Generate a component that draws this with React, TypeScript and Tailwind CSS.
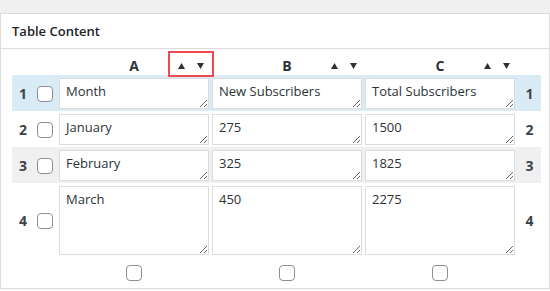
import React from "react";

const font = { fontFamily: '"Segoe UI", "Open Sans", "Noto Sans", sans-serif' };

function Up() {
  return (
    <svg width="7" height="6" viewBox="0 0 7 6" className="block">
      <path d="M3.5 0 L7 6 L0 6 Z" fill="#2c3338" />
    </svg>
  );
}
function Down() {
  return (
    <svg width="7" height="6" viewBox="0 0 7 6" className="block">
      <path d="M0 0 L7 0 L3.5 6 Z" fill="#2c3338" />
    </svg>
  );
}

function Check() {
  return (
    <span className="block w-[16px] h-[16px] rounded-[4px] border border-[#8c8f94] bg-white shrink-0" />
  );
}

const rows = [
  { n: 1, cells: ["Month", "New Subscribers", "Total Subscribers"], bg: "bg-[#d9ebf5]", tall: false },
  { n: 2, cells: ["January", "275", "1500"], bg: "bg-white", tall: false },
  { n: 3, cells: ["February", "325", "1825"], bg: "bg-[#f0f0f1]", tall: false },
  { n: 4, cells: ["March", "450", "2275"], bg: "bg-white", tall: true },
];

export default function App() {
  return (
    <div className="w-[550px] h-[291px] bg-white text-[#2c3338]" style={font}>
      <div className="h-[13px] bg-[#f0f0f1]" />
      <div className="border border-[#dcdcde] bg-white">
        <div className="h-[35px] flex items-center pt-[2px] px-[11px] text-[13px] font-semibold text-[#1d2327] border-b border-[#dcdcde]">
          Table Content
        </div>
        <div className="pl-[11px] pr-[8px]">
          <div className="grid grid-cols-[44px_150px_150px_150px_23px] gap-x-[3px] h-[26px]">
            <div />
            {["A", "B", "C"].map((l, i) => (
              <div key={l} className="relative flex justify-center pt-[8px]">
                <span className="text-[14px] leading-[18px] font-bold text-[#2c3338]">{l}</span>
                <div className="absolute right-[5px] top-[14px] flex gap-[12px]">
                  <Up />
                  <Down />
                </div>
                {i === 0 && (
                  <div className="absolute left-[109px] top-[2px] w-[46px] h-[26px] border-2 border-[#ec4a4f]" />
                )}
              </div>
            ))}
            <div />
          </div>
          {rows.map((r) => (
            <div
              key={r.n}
              className={`grid grid-cols-[44px_150px_150px_150px_23px] gap-x-[3px] pt-[3px] pb-[2px] ${r.bg}`}
            >
              <div className="flex items-center justify-end gap-[10px] pr-[3px]">
                <span className="text-[14px] font-bold text-[#3c434a]">{r.n}</span>
                <Check />
              </div>
              {r.cells.map((c, i) => (
                <textarea
                  key={i}
                  defaultValue={c}
                  className={`block w-[150px] ${r.tall ? "h-[69px]" : "h-[31px]"} border border-[#dcdcde] bg-white px-[6px] pt-[2px] pb-[2px] text-[13px] leading-[20px] text-[#2c3338] outline-none`}
                  style={font}
                />
              ))}
              <div className="flex items-center justify-center">
                <span className="text-[14px] font-bold text-[#3c434a]">{r.n}</span>
              </div>
            </div>
          ))}
          <div className="grid grid-cols-[44px_150px_150px_150px_23px] gap-x-[3px] h-[31px] items-center">
            <div />
            <div className="flex justify-center"><Check /></div>
            <div className="flex justify-center"><Check /></div>
            <div className="flex justify-center"><Check /></div>
            <div />
          </div>
        </div>
      </div>
    </div>
  );
}
